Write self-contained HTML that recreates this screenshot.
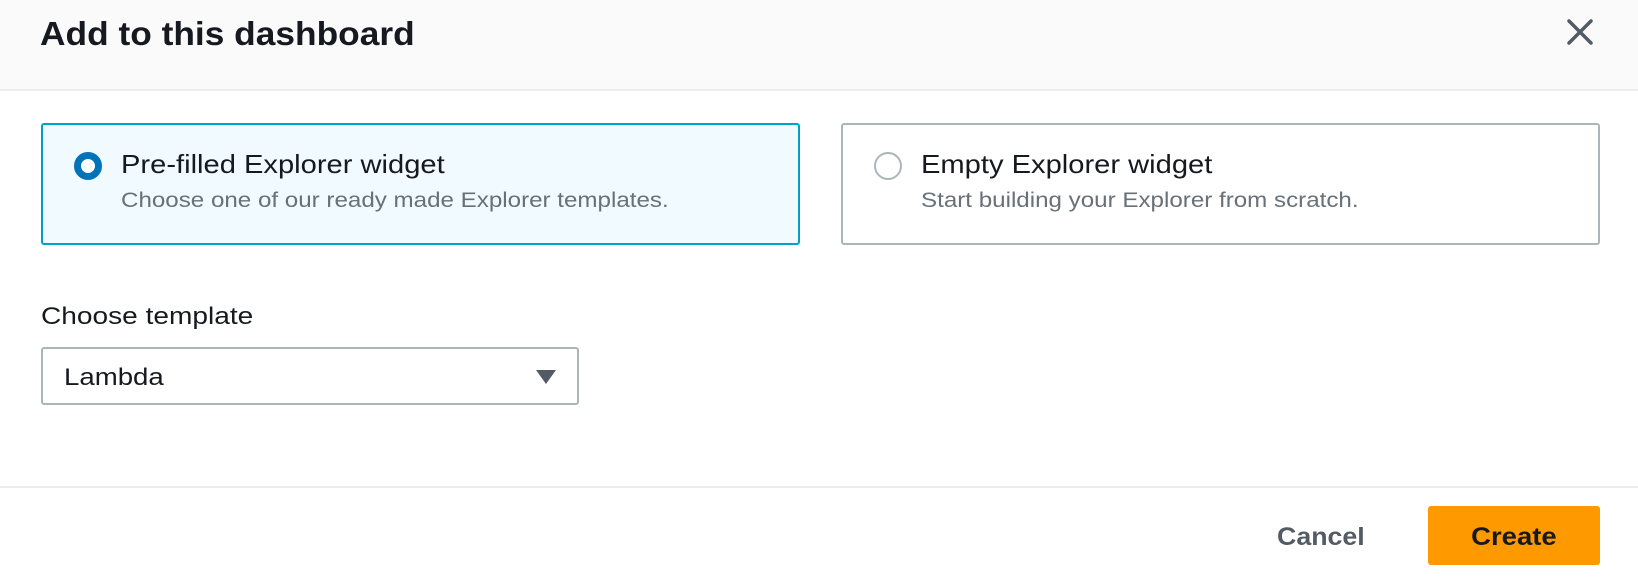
<!DOCTYPE html>
<html><head><meta charset="utf-8"><style>
*{margin:0;padding:0;box-sizing:border-box}
body{width:1638px;height:584px;background:#fff;font-family:"Liberation Sans",sans-serif;position:relative;overflow:hidden;color:#16191f}
.s{display:inline-block;transform-origin:0 50%;white-space:nowrap}
.hdr{position:absolute;left:0;top:0;width:1638px;height:91px;background:#fafafa;border-bottom:2px solid #eaeded}
.title{position:absolute;left:40px;top:15px;font-size:33px;font-weight:bold}
.box{position:absolute;top:123px;width:759px;height:122px;border:2px solid #aab7b8;border-radius:3px;background:#fff}
.box.sel{left:41px;border-color:#00a1c9;background:#f1faff}
.box.b2{left:841px}
.radio{position:absolute;left:31px;top:27px;width:28px;height:28px;border-radius:50%;border:2px solid #aab7b8;background:#fff}
.sel .radio{border:7px solid #0073bb}
.t1{position:absolute;left:78px;top:24px;font-size:26px}
.t2{position:absolute;left:78px;top:64px;font-size:21px;color:#687078}
.lbl{position:absolute;left:41px;top:303px;font-size:24px}
.selbox{position:absolute;left:41px;top:347px;width:538px;height:58px;border:2px solid #aab7b8;border-radius:3px}
.selbox span{position:absolute;left:21px;top:15px;font-size:24px}
.tri{position:absolute;left:493px;top:21px;width:0;height:0;border-left:10px solid transparent;border-right:10px solid transparent;border-top:14px solid #545b64}
.ftr{position:absolute;left:0;top:486px;width:1638px;height:2px;background:#eaeded}
.cancel{position:absolute;left:1277px;top:523px;font-size:25px;font-weight:bold;color:#545b64}
.create{position:absolute;left:1428px;top:506px;width:172px;height:59px;background:#ff9900;border-radius:3px;font-size:25px;font-weight:bold;text-align:center;line-height:63px}
</style></head><body>
<div class="hdr"><div class="title"><span class="s" style="transform:scaleX(1.07)">Add to this dashboard</span></div>
<svg style="position:absolute;left:1566px;top:18px" width="28" height="28" viewBox="0 0 28 28"><path d="M3 3L25 25M25 3L3 25" stroke="#545b64" stroke-width="3.5" stroke-linecap="round"/></svg></div>
<div class="box sel"><div class="radio"></div><div class="t1"><span class="s" style="transform:scaleX(1.12)">Pre-filled Explorer widget</span></div><div class="t2"><span class="s" style="transform:scaleX(1.15)">Choose one of our ready made Explorer templates.</span></div></div>
<div class="box b2"><div class="radio"></div><div class="t1"><span class="s" style="transform:scaleX(1.12)">Empty Explorer widget</span></div><div class="t2"><span class="s" style="transform:scaleX(1.15)">Start building your Explorer from scratch.</span></div></div>
<div class="lbl"><span class="s" style="transform:scaleX(1.17)">Choose template</span></div>
<div class="selbox"><span class="s" style="transform:scaleX(1.15)">Lambda</span><div class="tri"></div></div>
<div class="ftr"></div>
<div class="cancel"><span class="s" style="transform:scaleX(1.07)">Cancel</span></div>
<div class="create"><span class="s" style="transform:scaleX(1.1);transform-origin:50% 50%">Create</span></div>
</body></html>
